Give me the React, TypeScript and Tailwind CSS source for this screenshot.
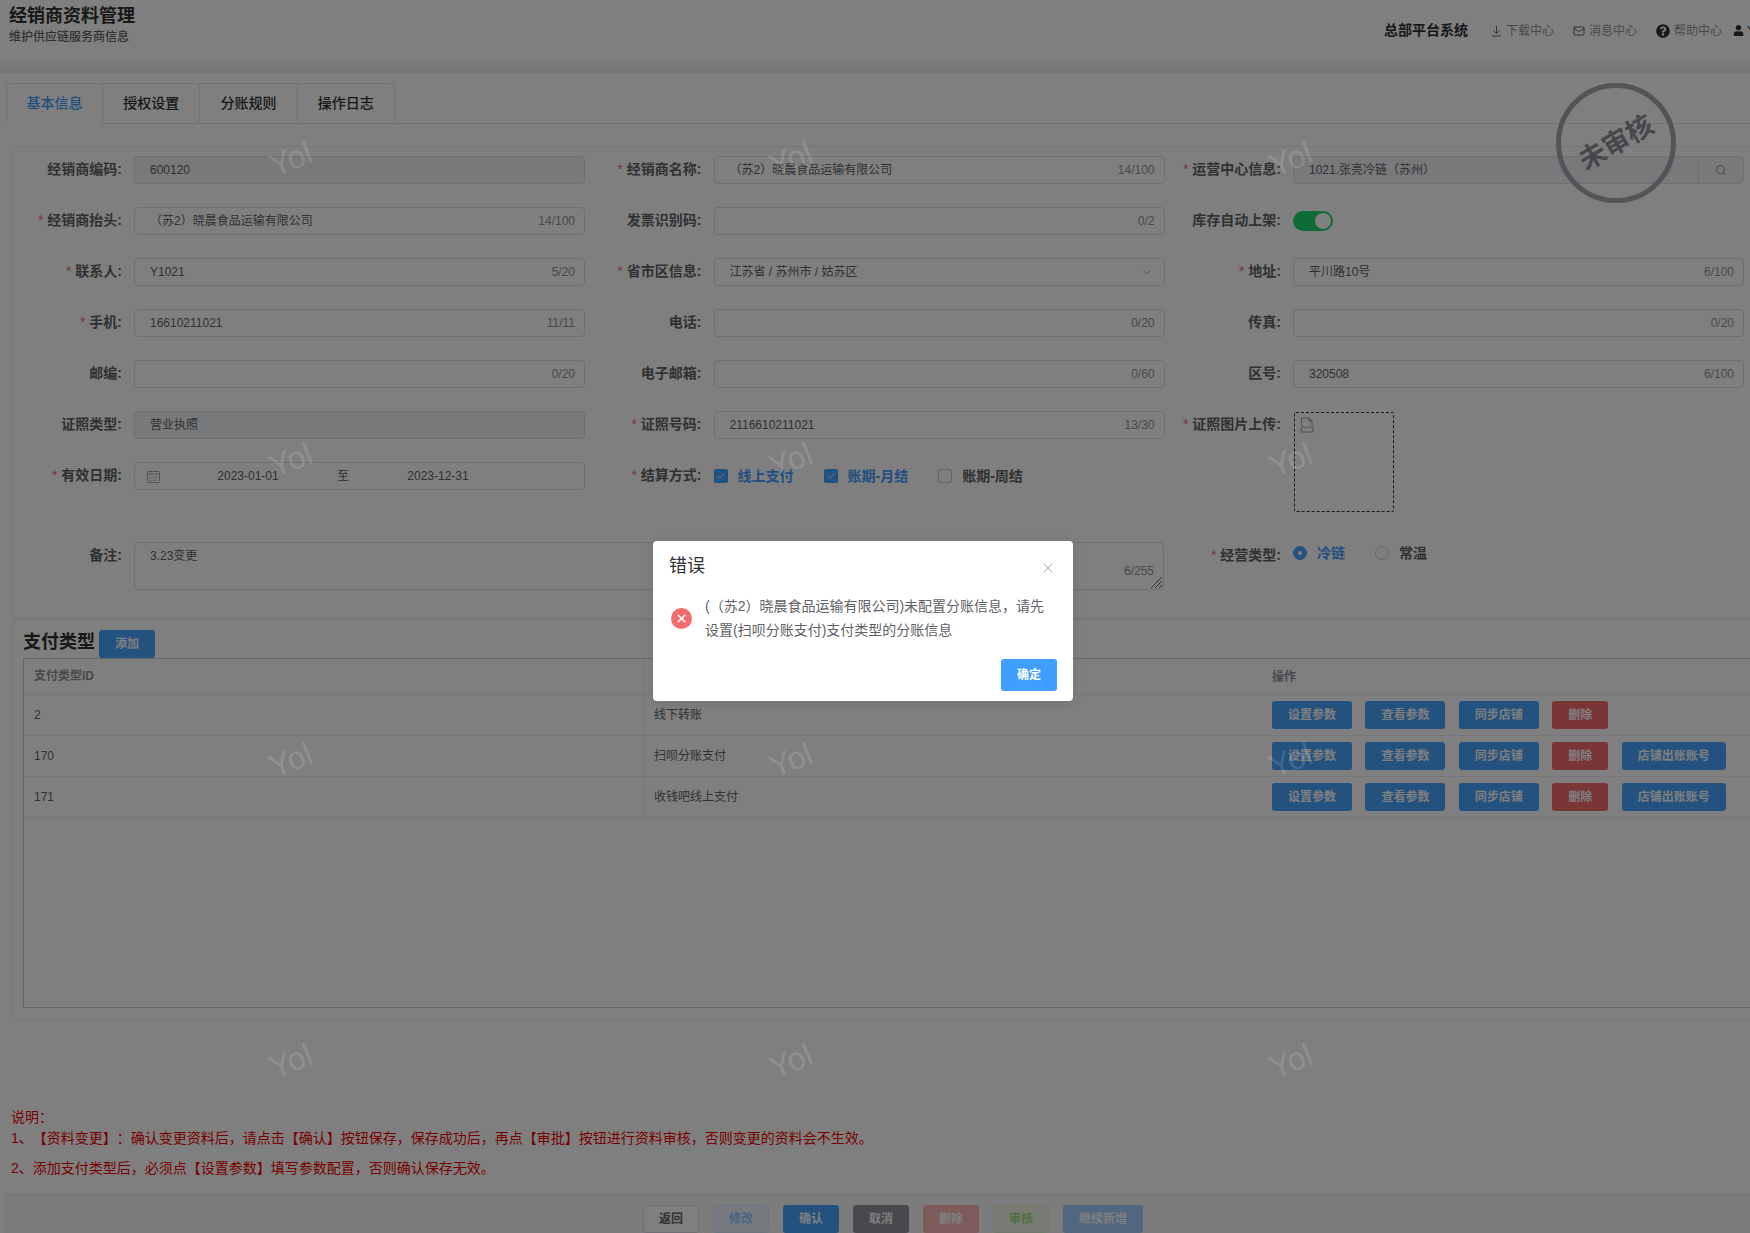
import { type ReactNode } from "react";
import { Check, ChevronDown, Mail, Search, X } from "lucide-react";
import { FaQuestionCircle, FaUser } from "react-icons/fa";

const FONT = "font-['Liberation_Sans','Noto_Sans_CJK_SC',sans-serif]";

const Label = ({ text, required }: { text: string; required?: boolean }) => (
  <div className="w-[109px] shrink-0 text-right text-[14px] leading-[27px] font-bold text-[#606266]">
    {required && <span className="mr-1 font-normal text-[#f56c6c]">*</span>}
    {text}:
  </div>
);

const Input = ({
  value,
  count,
  disabled,
}: {
  value?: string;
  count?: string;
  disabled?: boolean;
}) => (
  <div
    className={`flex h-[28px] w-[451px] items-center justify-between rounded border border-[#dcdfe6] pr-[9px] pl-[15px] text-[12px] ${
      disabled ? "bg-[#f0f2f5]" : "bg-white"
    }`}
  >
    <span className="text-[#606266]">{value}</span>
    {count && <span className="text-[#909399]">{count}</span>}
  </div>
);

const Field = ({
  label,
  required,
  children,
}: {
  label: string;
  required?: boolean;
  children: ReactNode;
}) => (
  <div className="flex h-[51px] items-start gap-3">
    <Label text={label} required={required} />
    {children}
  </div>
);

const CheckItem = ({ text, on }: { text: string; on?: boolean }) => (
  <div className="mr-[30px] flex items-center gap-[10px]">
    <span
      className={`flex h-[14px] w-[14px] items-center justify-center rounded-[2px] border ${
        on ? "border-[#409eff] bg-[#48a4ff]" : "border-[#c8ccd3] bg-white"
      }`}
    >
      {on && <Check size={10} strokeWidth={2} className="text-white" />}
    </span>
    <span className={`text-[14px] font-bold ${on ? "text-[#409eff]" : "text-[#606266]"}`}>{text}</span>
  </div>
);

const RadioItem = ({ text, on }: { text: string; on?: boolean }) => (
  <div className="mr-[30px] flex items-center gap-[10px]">
    <span
      className={`flex h-[14px] w-[14px] items-center justify-center rounded-full border ${
        on ? "border-[#48a4ff] bg-[#48a4ff]" : "border-[#c8ccd3] bg-white"
      }`}
    >
      {on && <span className="h-1 w-1 rounded-full bg-white" />}
    </span>
    <span className={`text-[14px] font-bold ${on ? "text-[#409eff]" : "text-[#606266]"}`}>{text}</span>
  </div>
);

const payTypes = [
  { id: "2", name: "线下转账", extra: false },
  { id: "170", name: "扫呗分账支付", extra: true },
  { id: "171", name: "收钱吧线上支付", extra: true },
];

const RowButton = ({ text, red }: { text: string; red?: boolean }) => (
  <button
    className={`h-[28px] rounded-[3px] px-4 text-[12px] font-bold text-white ${red ? "bg-[#f56c6c]" : "bg-[#48a4ff]"}`}
  >
    {text}
  </button>
);

const marks = [
  [269, 139],
  [769, 139],
  [1269, 139],
  [269, 440],
  [769, 440],
  [1269, 440],
  [269, 740],
  [769, 740],
  [1269, 740],
  [269, 1041],
  [769, 1041],
  [1269, 1041],
];

export default function App() {
  return (
    <div className={`relative h-[1233px] w-full overflow-hidden bg-white [text-spacing-trim:space-all] ${FONT}`}>
      {/* Top bar */}
      <header className="flex h-[73px] items-start justify-between bg-[linear-gradient(to_bottom,#ffffff_78%,#eceeee_100%)] pl-[9px]">
        <div className="pt-[3.5px]">
          <h1 className="text-[18px] leading-[24px] font-bold text-[#303133]">经销商资料管理</h1>
          <p className="text-[12px] leading-[18px] font-medium text-[#606266]">维护供应链服务商信息</p>
        </div>
        <div className="flex h-[61px] items-center whitespace-nowrap text-[12px] text-[#909399]">
          <span className="mr-[23px] text-[14px] font-bold text-[#303133]">总部平台系统</span>
          <span className="mr-[19px] flex items-center gap-[4px]">
            <svg width="11" height="12" viewBox="0 0 11 12" fill="none" stroke="#606266" strokeWidth="1">
              <path d="M5.5 1v7M2.5 5.5l3 3 3-3M1 11h9" />
            </svg>
            下载中心
          </span>
          <span className="mr-[19px] flex items-center gap-[4px]">
            <Mail size={12} className="text-[#606266]" />
            消息中心
          </span>
          <span className="mr-[11px] flex items-center gap-[4px]">
            <FaQuestionCircle size={14} className="text-[#303133]" />
            帮助中心
          </span>
          <FaUser size={11} className="mr-[3px] shrink-0 text-[#303133]" />
          <span className="w-[3px] overflow-hidden text-[#303133]">Y</span>
        </div>
      </header>

      {/* Tabs */}
      <nav className="mt-[10px] ml-[6px] flex h-[41px] border-b border-[#e4e7ed]">
        {["基本信息", "授权设置", "分账规则", "操作日志"].map((t, i) => (
          <div
            key={t}
            className={`flex h-[41px] w-[97.2px] items-center justify-center border-t border-r border-[#e4e7ed] text-[14px] font-medium ${
              i === 0 ? "rounded-tl border-l border-b border-b-white text-[#409eff]" : "pb-[2px] text-[#303133]"
            } ${i === 3 ? "rounded-tr" : ""}`}
          >
            {t}
          </div>
        ))}
      </nav>

      {/* Form */}
      <section className="mt-[22px] ml-[12px] h-[473px] w-[1760px] rounded border border-[#ebeef5] pt-[9px]">
        <div className="grid grid-cols-[repeat(3,579.5px)]">
          <Field label="经销商编码">
            <Input value="600120" disabled />
          </Field>
          <Field label="经销商名称" required>
            <Input value="（苏2）晓晨食品运输有限公司" count="14/100" />
          </Field>
          <Field label="运营中心信息" required>
            <div className="flex h-[28px] w-[451px] items-center rounded border border-[#dcdfe6] bg-[#f0f2f5] text-[12px] text-[#606266]">
              <span className="flex-1 pl-[15px]">1021.张亮冷链（苏州）</span>
              <span className="flex h-full w-[45px] items-center justify-center border-l border-[#dcdfe6]">
                <Search size={12} className="text-[#909399]" />
              </span>
            </div>
          </Field>

          <Field label="经销商抬头" required>
            <Input value="（苏2）晓晨食品运输有限公司" count="14/100" />
          </Field>
          <Field label="发票识别码">
            <Input count="0/2" />
          </Field>
          <Field label="库存自动上架">
            <div className="mt-[4px] flex h-[20px] w-[40px] items-center justify-end rounded-full bg-[#1fd873] pr-[2px]">
              <span className="h-[16px] w-[16px] rounded-full bg-white" />
            </div>
          </Field>

          <Field label="联系人" required>
            <Input value="Y1021" count="5/20" />
          </Field>
          <Field label="省市区信息" required>
            <div className="flex h-[28px] w-[451px] items-center justify-between rounded border border-[#dcdfe6] bg-white pr-[10px] pl-[15px] text-[12px] text-[#606266]">
              江苏省 / 苏州市 / 姑苏区
              <ChevronDown size={14} strokeWidth={1.25} className="text-[#909399]" />
            </div>
          </Field>
          <Field label="地址" required>
            <Input value="平川路10号" count="6/100" />
          </Field>

          <Field label="手机" required>
            <Input value="16610211021" count="11/11" />
          </Field>
          <Field label="电话">
            <Input count="0/20" />
          </Field>
          <Field label="传真">
            <Input count="0/20" />
          </Field>

          <Field label="邮编">
            <Input count="0/20" />
          </Field>
          <Field label="电子邮箱">
            <Input count="0/60" />
          </Field>
          <Field label="区号">
            <Input value="320508" count="6/100" />
          </Field>

          <Field label="证照类型">
            <Input value="营业执照" disabled />
          </Field>
          <Field label="证照号码" required>
            <Input value="2116610211021" count="13/30" />
          </Field>
          <Field label="证照图片上传" required>
            <div className="mt-[1px] ml-[1px] h-[100px] w-[100px] rounded-[2px] border border-dashed border-[#303133] pt-[4px] pl-[5px]">
              <svg width="14" height="16" viewBox="0 0 14 16" fill="none" stroke="#909399" strokeWidth="0.9">
                <path d="M1.5 9V1h7.5l3 3v5M9 1v3h3M1 11l2.5-1.5L6 11l2.5-1.5L11 11l2-1M1 11v4h12v-5" />
              </svg>
            </div>
          </Field>

          <Field label="有效日期" required>
            <div className="flex h-[28px] w-[451px] items-center rounded border border-[#dcdfe6] bg-white text-[12px] text-[#606266]">
              <span className="flex w-[25px] justify-end">
                <svg width="13" height="13" viewBox="0 0 13 13" fill="none" stroke="#909399" strokeWidth="0.8">
                  <rect x="0.5" y="1.5" width="12" height="11" rx="1" />
                  <path d="M0.5 4h12M3.5 0.5v2M9.5 0.5v2" />
                  <path d="M2.5 6.5h8M2.5 8.5h8M2.5 10.5h8" strokeDasharray="1 1" />
                </svg>
              </span>
              <span className="w-[176px] text-center">2023-01-01</span>
              <span className="w-[14px] text-center">至</span>
              <span className="w-[176px] text-center">2023-12-31</span>
            </div>
          </Field>
          <Field label="结算方式" required>
            <div className="flex h-[28px] items-center">
              <CheckItem text="线上支付" on />
              <CheckItem text="账期-月结" on />
              <CheckItem text="账期-周结" />
            </div>
          </Field>
          <div />
        </div>

        {/* Remarks span two columns, business type sits in the third */}
        <div className="mt-[29px] flex">
          <div className="flex w-[1159px] gap-3">
            <Label text="备注" />
            <div className="relative h-[48px] w-[1030px] rounded border border-[#dcdfe6] bg-white pt-[3px] pl-[15px] text-[12px] leading-[20px] text-[#606266]">
              3.23变更
              <span className="absolute right-[9px] bottom-[8px] text-[#909399]">6/255</span>
              <svg className="absolute right-0 bottom-0" width="13" height="13" viewBox="0 0 13 13" stroke="#606266" strokeWidth="1">
                <path d="M1 12L12 1M5 12l7-7M9 12l3-3" />
              </svg>
            </div>
          </div>
          <div className="flex gap-3">
            <Label text="经营类型" required />
            <div className="-mt-[3px] flex h-[28px] items-center">
              <RadioItem text="冷链" on />
              <RadioItem text="常温" />
            </div>
          </div>
        </div>
      </section>

      {/* Pay types */}
      <section className="ml-[12px] h-[401px] w-[1760px] rounded border border-[#ebeef5] pt-[10px] pl-[10px]">
        <div className="flex h-[28px] items-start gap-[4px]">
          <h2 className="text-[18px] leading-[24px] font-bold text-[#303133]">支付类型</h2>
          <button className="h-[28px] w-[56px] rounded-[3px] bg-[#48a4ff] text-[12px] font-bold text-white">添加</button>
        </div>
        <div className="h-[350px] w-[1745px] border border-[#cfcfcf] text-[12px] text-[#606266]">
          <div className="flex h-[36px] items-center border-b border-[#ebeef5] font-bold text-[#909399]">
            <div className="h-full w-[620px] border-r border-[#ebeef5] pl-[10px] leading-[35px]">支付类型ID</div>
            <div className="w-[618px]" />
            <div className="pl-[10px]">操作</div>
          </div>
          {payTypes.map((row) => (
            <div key={row.id} className="flex h-[41.1px] border-b border-[#ebeef5]">
              <div className="flex w-[620px] items-center border-r border-[#ebeef5] pb-[1px] pl-[10px]">{row.id}</div>
              <div className="flex w-[618px] items-center pb-[1px] pl-[10px]">{row.name}</div>
              <div className="flex items-center gap-[13.4px] pl-[10px]">
                <RowButton text="设置参数" />
                <RowButton text="查看参数" />
                <RowButton text="同步店铺" />
                <RowButton text="删除" red />
                {row.extra && <RowButton text="店铺出账账号" />}
              </div>
            </div>
          ))}
        </div>
      </section>

      {/* Notes */}
      <div className="mt-[87px] pl-[11px] text-[14px] text-[#f00000]">
        <p className="leading-[20px]">说明：</p>
        <p className="leading-[22px]">1、【资料变更】：确认变更资料后，请点击【确认】按钮保存，保存成功后，再点【审批】按钮进行资料审核，否则变更的资料会不生效。</p>
        <p className="mt-[8px] leading-[22px]">2、添加支付类型后，必须点【设置参数】填写参数配置，否则确认保存无效。</p>
      </div>

      {/* Footer actions */}
      <footer className="mt-[15px] ml-[6px] flex h-[60px] gap-[14px] border-t border-[#ebeef5] bg-[#f8f8f8] pt-[10px] pl-[637px] text-[12px] font-bold">
        <button className="h-[28px] w-[56px] rounded-[3px] border border-[#dcdfe6] bg-white text-[#606266]">返回</button>
        <button className="h-[28px] w-[56px] rounded-[3px] border border-[#d9ecff] bg-[#ecf5ff] text-[#8cc5ff]">修改</button>
        <button className="h-[28px] w-[56px] rounded-[3px] bg-[#48a4ff] text-white">确认</button>
        <button className="h-[28px] w-[56px] rounded-[3px] bg-[#909399] text-white">取消</button>
        <button className="h-[28px] w-[56px] rounded-[3px] bg-[#fab6b6] text-white">删除</button>
        <button className="h-[28px] w-[56px] rounded-[3px] border border-[#e1f3d8] bg-[#f0f9eb] text-[#a4da89]">审核</button>
        <button className="h-[28px] w-[80px] rounded-[3px] bg-[#a0cfff] text-white">继续新增</button>
      </footer>

      {/* Audit stamp */}
      <div className="absolute top-[83px] left-[1556px] flex h-[120px] w-[120px] items-center justify-center rounded-full border-[5px] border-[#a6a8ae]">
        <span className="-rotate-[30deg] text-[27px] font-bold text-[#8e9096]">未审核</span>
      </div>

      {/* Modal mask */}
      <div className="absolute inset-0 bg-black/50" />

      {/* Watermark sits above the mask */}
      {marks.map(([x, y]) => (
        <span
          key={`${x}-${y}`}
          className="pointer-events-none absolute -rotate-[22deg] text-[32px] leading-[40px] text-white/15"
          style={{ left: x, top: y }}
        >
          Yol
        </span>
      ))}

      {/* Error dialog */}
      <div className="absolute top-[541px] left-[653px] h-[160px] w-[420px] rounded bg-white px-4 pt-[11px] shadow-[0_2px_12px_rgba(0,0,0,0.1)]">
        <div className="flex items-center justify-between">
          <span className="text-[18px] leading-[28px] text-[#303133]">错误</span>
          <X size={16} strokeWidth={1.25} className="mt-[3px] mr-[1px] text-[#909399]" />
        </div>
        <div className="mt-[14px] flex items-center">
          <span className="ml-[2px] flex h-[21px] w-[21px] shrink-0 items-center justify-center rounded-full bg-[#f56c6c]">
            <X size={13} strokeWidth={3} className="text-white" />
          </span>
          <p className="ml-[13px] w-[345px] text-[14px] leading-[24px] text-[#606266]">
            (（苏2）晓晨食品运输有限公司)未配置分账信息，请先设置(扫呗分账支付)支付类型的分账信息
          </p>
        </div>
        <div className="mt-[17px] flex justify-end">
          <button className="h-[32px] w-[56px] rounded-[3px] bg-[#409eff] text-[12px] font-bold text-white">确定</button>
        </div>
      </div>
    </div>
  );
}
